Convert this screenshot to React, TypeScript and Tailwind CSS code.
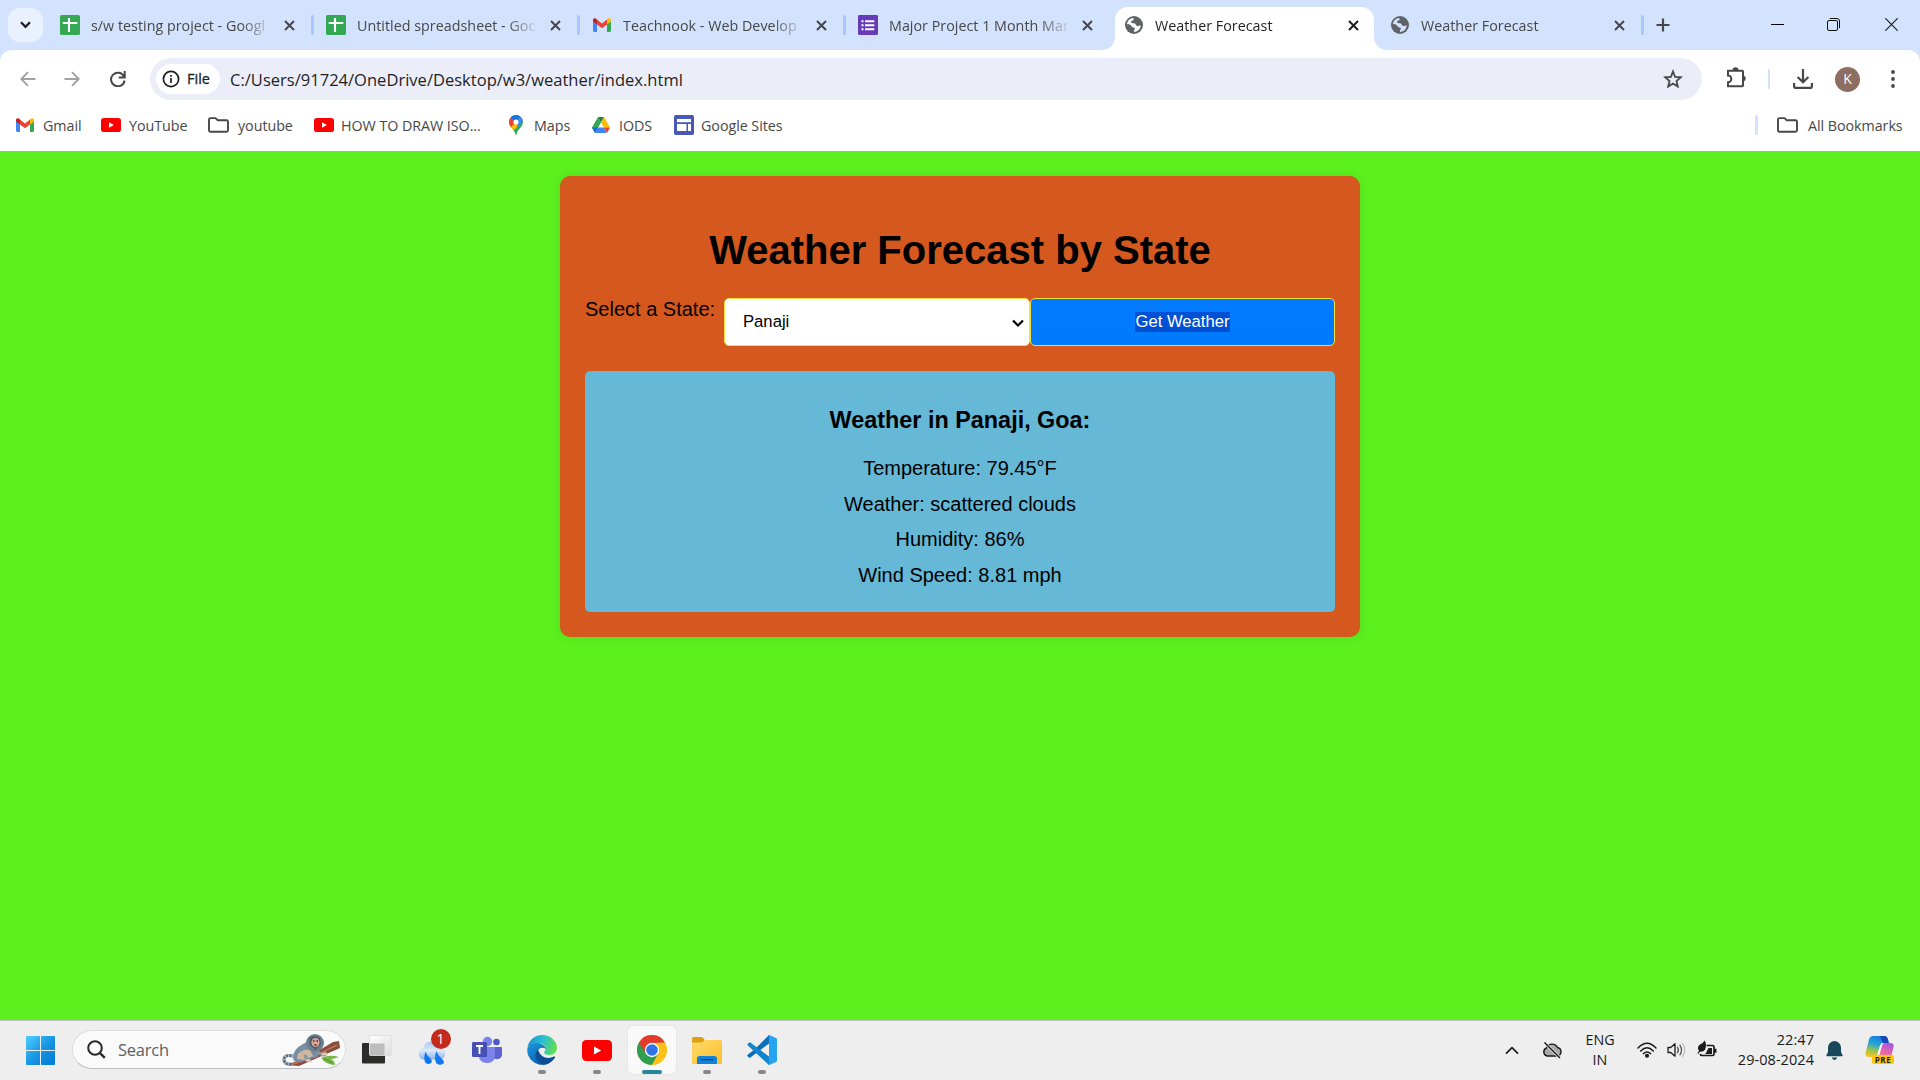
import React from "react";

type IconProps = { className?: string };

function SheetsIcon() {
  return (
    <svg width="20" height="20" viewBox="0 0 20 20">
      <rect width="20" height="20" rx="1.6" fill="#34a853" />
      <path d="M2.7 8h14.6M9 3v14" stroke="#fff" strokeWidth="2.1" />
    </svg>
  );
}

function GmailIcon() {
  return (
    <svg width="18" height="14" viewBox="0 0 18 14">
      <path d="M0 2.2V12.6Q0 14 1.3 14H4V6.2L0 2.8Z" fill="#4285f4" />
      <path d="M18 2.2V12.6Q18 14 16.7 14H14V6.2L18 2.8Z" fill="#34a853" />
      <path d="M14 1.6 15.2.6C16.4-.4 18 .4 18 2V3.6L14 6.6Z" fill="#fbbc04" />
      <path d="M4 1.6 9 5.4 14 1.6V6.6L9 10.3 4 6.6Z" fill="#ea4335" />
      <path d="M0 2C0 .4 1.6-.4 2.8.6L4 1.6V6.6L0 3.6Z" fill="#c5221f" />
    </svg>
  );
}

function FormsIcon() {
  return (
    <svg width="20" height="20" viewBox="0 0 20 20">
      <rect width="20" height="20" rx="1.4" fill="#673ab7" />
      <path d="M3.5 6.2h2M3.5 10.2h2M3.5 14.2h2M7 6.2h9.3M7 10.2h9.3M7 14.2h9.3" stroke="#fff" strokeWidth="2.1" />
    </svg>
  );
}

function GlobeIcon({ land }: { land: string }) {
  return (
    <svg width="18" height="18" viewBox="0 0 18 18">
      <circle cx="9" cy="9" r="9" fill="#5f6368" />
      <path
        d="M8.200 2C9.200 3.200 8.600 4.600 7 4.800c-1 .2-1 1-.8 1.800.3.8 1.600.6 2.900.6 1.900 0 1.600 2.400 3 2.700 1.300.2 2.400-.3 3.700-.5-.4 3.400-3 6.200-6.500 6.500-.6-.9-.2-2 .4-2.600.7-.8-.1-1.700-1-1.800-2-.1-2-1.800-3.200-2.600C4.500 8.100 3 8.400 2 8 2.400 4.800 4.900 2.300 8.200 2Z"
        fill={land}
      />
    </svg>
  );
}

function CrossIcon({ className = "" }: IconProps) {
  return (
    <svg width="11" height="11" viewBox="0 0 11 11" className={className}>
      <path d="m1 1 9 9M10 1 1 10" stroke="currentColor" strokeWidth="2" />
    </svg>
  );
}

function YouTubeIcon({ className = "" }: IconProps) {
  return (
    <svg viewBox="0 0 20 14" className={className}>
      <rect width="20" height="14" rx="2.8" fill="#ff0000" />
      <path d="m8 4.300 4.800 2.700L8 9.700Z" fill="#fff" />
    </svg>
  );
}

function FolderIcon() {
  return (
    <svg width="21" height="16" viewBox="0 0 21 16">
      <path
        d="M1 2.600Q1 1.100 2.500 1.100H7.600L9.700 3.300H18.500Q20 3.300 20 4.800V13.200Q20 14.700 18.500 14.700H2.500Q1 14.700 1 13.200Z"
        fill="none"
        stroke="#474747"
        strokeWidth="1.9"
      />
    </svg>
  );
}

function MapsIcon() {
  return (
    <svg width="14" height="20" viewBox="0 0 14 20">
      <defs>
        <clipPath id="pin">
          <path d="M7 0a7 7 0 0 1 7 7c0 5-5.500 7-6.500 12.500q-.5 1-1 0C5.500 14 0 12 0 7a7 7 0 0 1 7-7Z" />
        </clipPath>
      </defs>
      <g clipPath="url(#pin)">
        <path d="M0 0h14v20H0Z" fill="#34a853" />
        <path d="M0 12 7 5l4 4-9 9Z" fill="#fbbc04" />
        <path d="M0 2 7 7 1 13l-3-3Z" fill="#ea4335" />
        <path d="M1 2 7 7 12 0H3Z" fill="#1a73e8" />
        <path d="M7 7 12 0l3 5-6 7Z" fill="#4285f4" />
      </g>
      <circle cx="7" cy="7" r="2.600" fill="#fff" />
    </svg>
  );
}

function DriveIcon() {
  return (
    <svg width="18" height="16" viewBox="0 0 18 16">
      <path d="M6 0 0 10.500 3 16 9 5.400Z" fill="#34a853" />
      <path d="M6 0h6L9 5.400Z" fill="#188038" />
      <path d="M12 0 18 10.500H12L9 5.400Z" fill="#fbbc04" />
      <path d="M0 10.500H6L3 16Z" fill="#1967d2" />
      <path d="M6 10.500H12L15 16H3Z" fill="#4285f4" />
      <path d="M12 10.500H18L15 16Z" fill="#ea4335" />
    </svg>
  );
}

function SitesIcon() {
  return (
    <svg width="20" height="20" viewBox="0 0 20 20">
      <rect width="20" height="20" rx="1.800" fill="#4758b5" />
      <path d="M3 4h14v3.300H3ZM3 9h9.500v7H3ZM14 9h3v7h-3Z" fill="#fff" />
    </svg>
  );
}

type TabData = { title: string; icon: React.ReactNode; active?: boolean; divider?: boolean };

const tabs: TabData[] = [
  { title: "s/w testing project - Googl", icon: <SheetsIcon />, divider: true },
  { title: "Untitled spreadsheet - Goo", icon: <SheetsIcon />, divider: true },
  { title: "Teachnook - Web Develop", icon: <GmailIcon />, divider: true },
  { title: "Major Project 1 Month Mar", icon: <FormsIcon /> },
  { title: "Weather Forecast", icon: <GlobeIcon land="#ffffff" />, active: true },
  { title: "Weather Forecast", icon: <GlobeIcon land="#d3e3fd" />, divider: true },
];

function Tab({ title, icon, active, divider }: TabData) {
  return (
    <div className="relative flex h-[50px] w-[266px] shrink-0 pt-[7px]">
      {active && (
        <>
          <div className="absolute top-[7px] right-[2px] bottom-0 left-[5px] rounded-t-[13px] bg-white" />
          <svg className="absolute bottom-0 -left-[8px]" width="13" height="13" viewBox="0 0 13 13">
            <path d="M13 0V13H0A13 13 0 0 0 13 0Z" fill="#fff" />
          </svg>
          <svg className="absolute -right-[11px] bottom-0" width="13" height="13" viewBox="0 0 13 13">
            <path d="M0 0V13H13A13 13 0 0 1 0 0Z" fill="#fff" />
          </svg>
        </>
      )}
      <div className="relative flex h-9 w-full items-center pl-[14px]">
        <span className="flex w-5 shrink-0 justify-center">{icon}</span>
        <span
          className={`ml-[11px] w-[178px] shrink-0 pt-[2px] text-[14.300px] leading-[34px] tracking-[0.020px] whitespace-nowrap [mask-image:linear-gradient(to_right,#000_150px,transparent_182px)] ${active ? "text-[#1f1f1f]" : "text-[#474747]"}`}
        >
          {title}
        </span>
        <CrossIcon className={active ? "ml-[15px] text-[#1f1f1f]" : "ml-[15px] text-[#474747]"} />
      </div>
      {divider && <div className="absolute top-[15px] -right-[2px] h-5 w-[3px] rounded-full bg-[#a8c7fa]" />}
    </div>
  );
}

function TabStrip() {
  return (
    <div className="flex h-[50px] bg-[#d3e3fd]">
      <div className="mt-2 ml-2 flex h-[34px] w-[35px] items-center justify-center rounded-[12px] bg-[#e9f0fe]">
        <svg width="11" height="8" viewBox="0 0 11 8">
          <path d="m1 1.300 4.500 4.500L10 1.300" fill="none" stroke="#1f1f1f" strokeWidth="2.300" />
        </svg>
      </div>
      <div className="ml-[3px] flex">
        {tabs.map((tab, i) => (
          <Tab key={i} {...tab} />
        ))}
      </div>
      <svg width="14" height="14" viewBox="0 0 14 14" className="mt-[18px] ml-[14px]">
        <path d="M7 .5v13M.5 7h13" stroke="#474747" strokeWidth="2.200" />
      </svg>
      <div className="ml-auto flex h-[49px] items-center pr-[22px] text-[#1f1f1f]">
        <div className="mr-[43px] h-px w-[13px] bg-black" />
        <svg width="13" height="13" viewBox="0 0 13 13" className="mr-[45px]" fill="none" stroke="#111">
          <rect x=".5" y="2.500" width="10" height="10" rx="1.500" />
          <path d="M2.800.5h7.200Q12.500.5 12.500 3v7.200" />
        </svg>
        <svg width="13" height="13" viewBox="0 0 13 13">
          <path d="m.3.3 12.400 12.400M12.700.3.3 12.700" stroke="#1f1f1f" strokeWidth="1.200" />
        </svg>
      </div>
    </div>
  );
}

function AddressBar() {
  return (
    <div className="flex h-[58px] items-center">
      <svg width="16" height="16" viewBox="0 0 16 16" className="ml-5" fill="none" stroke="#a2a2a2" strokeWidth="1.900">
        <path d="M15.500 8H2M8 1.200 1.300 8 8 14.800" />
      </svg>
      <svg width="16" height="16" viewBox="0 0 16 16" className="ml-[28px]" fill="none" stroke="#a2a2a2" strokeWidth="1.900">
        <path d="M.5 8H14M8 1.200 14.700 8 8 14.800" />
      </svg>
      <svg width="16" height="16" viewBox="0 0 16 16" className="ml-[30px]" fill="none" stroke="#474747" strokeWidth="2">
        <path d="M14 5.500A6.800 6.800 0 1 0 14.600 9.500M14.700 0v6.400H8.700" />
      </svg>
      <div className="ml-[24px] flex h-[42px] w-[1552px] items-center rounded-full bg-[#ebeef8] pl-[6px]">
        <div className="flex h-[30px] w-16 items-center rounded-full bg-white pl-[6px]">
          <svg width="18" height="18" viewBox="0 0 18 18">
            <circle cx="9" cy="9" r="7.600" fill="none" stroke="#1f1f1f" strokeWidth="1.700" />
            <path d="M9 8v5M9 5v1.700" stroke="#1f1f1f" strokeWidth="1.700" />
          </svg>
          <span className="ml-[7px] text-[14.500px] text-[#1f1f1f] [-webkit-text-stroke:0.300px]">File</span>
        </div>
        <span className="ml-[10px] pt-[2px] text-[16.500px] tracking-[0.020px] whitespace-nowrap text-[#1f1f1f]">
          C:/Users/91724/OneDrive/Desktop/w3/weather/index.html
        </span>
        <svg width="20" height="20" viewBox="0 0 20 20" className="mr-[19px] ml-auto">
          <path
            d="m10 2.500 2.100 5.300 5.700.5-4.300 3.700 1.300 5.600-4.800-3-4.800 3 1.300-5.600L2.200 8.300l5.700-.5Z"
            fill="none"
            stroke="#474747"
            strokeWidth="1.800"
          />
        </svg>
      </div>
      <svg width="21" height="22" viewBox="0 0 21 22" className="mb-[2px] ml-[24px]">
        <path
          d="M2 3.800H16.300Q17 3.800 17 4.500V18.600Q17 19.300 16.300 19.300H2V15.300A3.200 3.200 0 0 0 2 8.600Z"
          fill="none"
          stroke="#474747"
          strokeWidth="2"
        />
        <path d="M6.500 3.200a3 3 0 0 1 6 0ZM17.500 8.600a3 3 0 0 1 0 5.800Z" fill="#474747" />
      </svg>
      <div className="ml-[21px] h-5 w-[2px] bg-[#d3e3fd]" />
      <svg width="20" height="20" viewBox="0 0 20 20" className="ml-[23px]" fill="none" stroke="#474747" strokeWidth="2.200">
        <path d="M10 0v12.500M4.600 8 10 13.300 15.400 8M1.100 14v3.200Q1.100 18.900 2.800 18.900H17.200Q18.900 18.900 18.900 17.200V14" />
      </svg>
      <div className="ml-[22px] flex size-[25px] items-center justify-center rounded-full bg-[#8d6e63] text-[14px] leading-none text-white">
        K
      </div>
      <svg width="4" height="18" viewBox="0 0 4 18" className="ml-[31px]" fill="#474747">
        <circle cx="2" cy="2" r="1.900" />
        <circle cx="2" cy="9" r="1.900" />
        <circle cx="2" cy="16" r="1.900" />
      </svg>
    </div>
  );
}

function Bookmark({ icon, label, className }: { icon: React.ReactNode; label: string; className: string }) {
  return (
    <div className={`flex shrink-0 items-center whitespace-nowrap ${className}`}>
      {icon}
      <span className="pt-[2px] leading-5">{label}</span>
    </div>
  );
}

function BookmarksBar() {
  return (
    <div className="flex h-[35px] items-center pb-px pl-4 text-[14.300px] tracking-[-0.050px] text-[#474747]">
      <Bookmark className="w-[85px] gap-[9px]" icon={<GmailIcon />} label="Gmail" />
      <Bookmark className="w-[107px] gap-[8px]" icon={<YouTubeIcon className="h-[14px] w-5" />} label="YouTube" />
      <Bookmark className="w-[106px] gap-[9px]" icon={<FolderIcon />} label="youtube" />
      <Bookmark className="w-[195px] gap-[7px]" icon={<YouTubeIcon className="h-[14px] w-5" />} label="HOW TO DRAW ISO..." />
      <Bookmark className="w-[83px] gap-[11px]" icon={<MapsIcon />} label="Maps" />
      <Bookmark className="w-[82px] gap-[9px]" icon={<DriveIcon />} label="IODS" />
      <Bookmark className="w-[120px] gap-[7px]" icon={<SitesIcon />} label="Google Sites" />
      <div className="ml-auto h-5 w-[3px] rounded-full bg-[#d3e3fd]" />
      <Bookmark className="ml-[19px] w-[143px] gap-[10px]" icon={<FolderIcon />} label="All Bookmarks" />
    </div>
  );
}

const readings = ["Temperature: 79.45°F", "Weather: scattered clouds", "Humidity: 86%", "Wind Speed: 8.81 mph"];

function WeatherPage() {
  return (
    <main className="h-[869px] bg-[#5cf01e] pt-[25px] text-[20px] text-black [font-family:'Liberation_Sans',Arial,sans-serif]">
      <div className="mx-auto h-[461px] w-[800px] rounded-[10px] bg-[#d5581f] px-[25px] pt-[51px] shadow-[0_0_12px_rgba(0,0,0,0.1)]">
        <h1 className="text-center text-[40px] leading-[46px] font-bold">Weather Forecast by State</h1>
        <div className="mt-[25px] flex">
          <span className="w-[139px] leading-[23px]">Select a State:</span>
          <div className="flex h-[48px] w-[306px] items-center justify-between rounded-[5px] border border-[#f0e040] bg-white pr-[5px] pb-[2px] pl-[18px] text-[16.670px]">
            Panaji
            <svg width="12" height="9" viewBox="0 0 12 9" className="mt-[5px]">
              <path d="m1 1.500 5 5 5-5" fill="none" stroke="#000" strokeWidth="2.200" />
            </svg>
          </div>
          <button className="flex h-[48px] w-[305px] items-center justify-center rounded-[5px] border border-[#f0e040] bg-[#007bff] pb-px text-[16.670px] text-white">
            <span className="h-5 bg-[#0050d4] leading-[19px]">Get Weather</span>
          </button>
        </div>
        <section className="mt-[25px] h-[241px] rounded-[5px] bg-[#65b8d6] pt-[36px] text-center">
          <h3 className="text-[23.400px] leading-[27px] font-bold">Weather in Panaji, Goa:</h3>
          <div className="mt-[17px]">
            {readings.map((line) => (
              <p key={line} className="h-[35.500px] leading-[35.500px]">
                {line}
              </p>
            ))}
          </div>
        </section>
      </div>
    </main>
  );
}

function Marmoset() {
  return (
    <svg width="60" height="34" viewBox="0 0 60 34">
      <path d="M5 32 27 24 52 9l6-1 1 7-25 11-16 7Z" fill="#8a4b3c" />
      <path d="M9 32 30 25 56 12" stroke="#b9745f" strokeWidth="1.500" fill="none" />
      <path d="M40 25q8-4 18-1-5 2-8 2 4 2 4 6-9 0-14-7Z" fill="#79b84a" />
      <path d="M43 26q5 1 9 5" stroke="#4f8d2e" fill="none" />
      <path d="M12 23q-9-2-9 4 1 5 7 4" fill="none" stroke="#566c7b" strokeWidth="3" />
      <path d="M12 23q-9-2-9 4 1 5 7 4" fill="none" stroke="#a8b3ba" strokeWidth="3" strokeDasharray="1.500 2" />
      <path d="M12 25q0-9 10-14l9-5 8 8-2 10-8 2-10 3-6-1Z" fill="#7890a5" />
      <path d="M17 21q6-6 12-4l3 6-9 4-7-1Z" fill="#cfb79e" />
      <path d="m33 17 9 5 3-1M24 23l3 4" stroke="#8396a5" strokeWidth="3" strokeLinecap="round" fill="none" />
      <circle cx="34" cy="10" r="9" fill="#6b8192" />
      <path d="M28.500 5q5-4 10.500 0l1 6-5.500 6-5.500-5Z" fill="#4f5d6b" />
      <ellipse cx="34.500" cy="9.500" rx="4" ry="4.500" fill="#d8a596" />
      <path d="M32 8h1.500M35.500 8H37M33.500 12h2" stroke="#3b2a2a" strokeWidth="1.300" />
      <path d="M41 22q3-3 5 0M25 28q3-2 5 1" stroke="#e7c6ab" strokeWidth="2.500" fill="none" />
    </svg>
  );
}

function TaskViewIcon() {
  return (
    <svg width="30" height="30" viewBox="0 0 30 30">
      <defs>
        <linearGradient id="tv" x1="0" y1="0" x2="1" y2="1">
          <stop stopColor="#fff" />
          <stop offset="1" stopColor="#ddd" />
        </linearGradient>
      </defs>
      <rect y="8" width="23" height="20.500" rx="1" fill="#2c2c2a" />
      <rect x="7.500" y=".5" width="22" height="20" rx="1" fill="url(#tv)" stroke="#e2e2e2" />
      <path d="M8 8.500h14.500v12H8Z" fill="#bdbdbd" />
    </svg>
  );
}

function RainIcon() {
  return (
    <div className="relative size-[30px]">
      <svg width="30" height="30" viewBox="0 0 30 30">
        <defs>
          <linearGradient id="cloud" x1="0" y1="0" x2="0" y2="1">
            <stop stopColor="#a9c6ee" />
            <stop offset=".5" stopColor="#dbe8fa" />
            <stop offset="1" stopColor="#8fb2e6" />
          </linearGradient>
        </defs>
        <path d="M6 24.500a6 6 0 0 1 0-11.500 9 9 0 0 1 17-1 6.500 6.500 0 0 1 1 12.500Z" fill="url(#cloud)" />
        <path d="M8.500 16.500q1 3.500 4 6 3.500 3 1.800 5.200-3 2.500-5.800 0Q6 24 8.500 16.500ZM19.500 16q1 4 5 7.500 3.500 3 2 5-3.500 2.500-7 0Q16.500 24 19.500 16Z" fill="#0f78f2" />
      </svg>
      <span className="absolute -top-[6px] left-[14px] flex size-5 items-center justify-center rounded-full bg-[#c42b1c] text-[14px] leading-none text-white">
        1
      </span>
    </div>
  );
}

function TeamsIcon() {
  return (
    <svg width="30" height="30" viewBox="0 0 30 30">
      <circle cx="24.500" cy="7" r="3.300" fill="#5059c9" />
      <circle cx="15.500" cy="6.500" r="4.700" fill="#7b83eb" />
      <path d="M20 12h9.200q.8 0 .8.800V19q0 5-5 5.200-3-.2-5-2Z" fill="#5b63d0" />
      <path d="M7 12h16v9q0 6.500-8 7-8-.5-8-7Z" fill="#7b83eb" />
      <rect y="7" width="15" height="15" rx="1.300" fill="#4650b5" />
      <path d="M4 11h7M7.500 11v8" stroke="#fff" strokeWidth="1.900" />
    </svg>
  );
}

function EdgeIcon() {
  return (
    <svg width="30" height="30" viewBox="0 0 30 30">
      <defs>
        <linearGradient id="edgeTop" x1="0" y1=".3" x2="1" y2=".5">
          <stop stopColor="#1b8fd8" />
          <stop offset=".5" stopColor="#2bbfd0" />
          <stop offset="1" stopColor="#64df4c" />
        </linearGradient>
        <linearGradient id="edgeMid" x1="0" y1="0" x2=".6" y2="1">
          <stop stopColor="#1b98e0" />
          <stop offset="1" stopColor="#0e60ad" />
        </linearGradient>
      </defs>
      <path d="M.3 13A15 15 0 0 1 15 0c9 0 15 6.500 15 12.500 0 4.500-3.300 7.500-7.500 7.500-3.500 0-5.500-1-5.500-2.200 0-1 1.500-1.500 1.500-4C18.500 10.500 15 8 11 8 6 8 1.500 10.500.3 13Z" fill="url(#edgeTop)" />
      <path d="M.2 14C1.500 9.500 6.500 7.500 11 8c4.500.5 7.500 3.500 7.500 6-3-2.500-7-1-8 3-1.200 5 2.500 10.500 7.500 12.500A15 15 0 0 1 .2 14Z" fill="url(#edgeMid)" />
      <path d="M11 14.500c-2.500 2.500-3.500 6.500-1 10.500s6 5.300 9 4.400c4-1 7.200-3.700 9-7 .4-.8-.3-1.100-1-.8-6 2.900-13.500 1.400-16-7.100Z" fill="#0c4f94" />
    </svg>
  );
}

function ChromeIcon() {
  return (
    <svg width="30" height="30" viewBox="0 0 30 30">
      <circle cx="15" cy="15" r="15" fill="#fbc116" />
      <path d="M15 15 2 7.500A15 15 0 0 0 15 30l6.300-11Z" fill="#2f9e4f" />
      <path d="M15 15 8.700 18.700 2 7.500A15 15 0 0 1 28 7.500L15 8Z" fill="#e33b2e" />
      <path d="M15 8h13a15 15 0 0 1-13 22l6.200-11.300Z" fill="#fbc116" />
      <circle cx="15" cy="15" r="7.200" fill="#fff" />
      <circle cx="15" cy="15" r="5.800" fill="#2f74ea" />
    </svg>
  );
}

function ExplorerIcon() {
  return (
    <svg width="30" height="30" viewBox="0 0 30 30">
      <defs>
        <linearGradient id="folder" x1="0" y1="0" x2="1" y2="1">
          <stop stopColor="#ffdc6b" />
          <stop offset="1" stopColor="#f9bd2b" />
        </linearGradient>
      </defs>
      <path d="M0 3.500Q0 2 1.500 2H9.500Q11 2 13 5.500H28V10H0Z" fill="#dfa016" />
      <path d="M0 7.500H10L13 5H28.500Q30 5 30 6.500V27.500Q30 29 28.500 29H1.500Q0 29 0 27.500Z" fill="url(#folder)" />
      <path d="M5 29V23.500Q5 21 7.500 21H22.500Q25 21 25 23.500V29Z" fill="#1282d6" />
      <path d="M8.500 24.700h13" stroke="#0b4f8a" strokeWidth="1.300" />
    </svg>
  );
}

function CodeIcon() {
  return (
    <svg width="30" height="30" viewBox="0 0 30 30">
      <path d="M22 0 7.500 14.500 1.200 19.300 0 20.500l1.700 1.900q.8.600 1.700 0L22 8.500Z" fill="#0a6fb8" />
      <path d="M22 30 1.100 10.800Q-.2 9.500.9 8.600L2 7.700q.8-.6 1.700 0L22 21.500Z" fill="#1285cd" />
      <path d="M21 .5Q22-.3 23 .2L29 3q1 .5 1 1.600V25.400q0 1.100-1 1.600l-6 2.800q-1.200.5-2-.4 1 .3 1-1.200V1.700Q22 .4 21 .5Z" fill="#23a3f0" />
    </svg>
  );
}

function TaskButton({ children, state }: { children: React.ReactNode; state?: "open" | "active" }) {
  return (
    <div className="flex h-full w-[55px] items-center justify-center">
      <div
        className={`relative flex size-12 items-center justify-center rounded-[5px] ${state === "active" ? "bg-[#f9f9f9] shadow-[0_0_1px_1px_#e5e5e5]" : ""}`}
      >
        {children}
        {state === "open" && <div className="absolute bottom-0 left-5 h-1 w-2 rounded-full bg-[#868686]" />}
        {state === "active" && <div className="absolute bottom-0 left-[14px] h-1 w-5 rounded-full bg-[#27879a]" />}
      </div>
    </div>
  );
}

function SystemTray() {
  return (
    <div className="ml-auto flex h-full items-center pr-[25px] text-[#1b1b1b]">
      <svg width="14" height="9" viewBox="0 0 14 9" className="mr-[23px]">
        <path d="M1 7.700 7 1.700l6 6" fill="none" stroke="currentColor" strokeWidth="1.700" />
      </svg>
      <svg width="20" height="18" viewBox="0 0 20 18">
        <path d="M5 15a4.200 4.200 0 0 1-.5-8A6 6 0 0 1 15.500 6.500 4.300 4.300 0 0 1 15 15Z" fill="#a9a9a9" stroke="#1b1b1b" strokeWidth="1.400" />
        <path d="m3 2 15 15" stroke="#eee" strokeWidth="3" />
        <path d="m2.500 1.500 15.500 15.500" stroke="#1b1b1b" strokeWidth="1.500" />
      </svg>
      <div className="w-[75px] pl-px text-center text-[14.300px] leading-5">
        <div>ENG</div>
        <div>IN</div>
      </div>
      <svg width="20" height="16" viewBox="0 0 20 16" fill="none" stroke="currentColor" strokeWidth="1.500" strokeLinecap="round">
        <path d="M1 6q9-9.500 18 0M3.700 8.900q6.300-6.500 12.600 0M6.500 11.600q3.500-3.200 7 0" />
        <circle cx="10" cy="13.700" r="1.300" fill="currentColor" />
      </svg>
      <svg width="20" height="16" viewBox="0 0 20 16" className="ml-[10px]" fill="none" strokeLinecap="round">
        <path d="M1 5.500h2.700L8 1.800v12.400L3.700 10.500H1Z" stroke="#1b1b1b" strokeWidth="1.300" strokeLinejoin="round" />
        <path d="M10.500 5.300q1.800 2.700 0 5.400M13 3.300q3 4.700 0 9.400" stroke="#555" strokeWidth="1.300" />
        <path d="M15.500 1.500q4.500 6.500 0 13" stroke="#bdbdbd" strokeWidth="1.300" />
      </svg>
      <svg width="21" height="18" viewBox="0 0 21 18" className="mb-[2px] ml-[10px]">
        <path d="M9.500 5.500H15.500Q17 5.500 17 7V14Q17 15.500 15.500 15.500H5Q3.500 15.500 3.200 14M18.600 8.800v4" fill="none" stroke="#1b1b1b" strokeWidth="1.700" />
        <path d="M9 13 11.500 8H15v6H8Z" fill="#1b1b1b" />
        <path d="M7.500.5Q9.500 3 8.700 7.500 8 12 3 11.800L1 14 .3 13.200 2 11Q-.5 6.500 3 4.500 6.500 3 7.500.5Z" fill="#1b1b1b" />
      </svg>
      <div className="w-[96px] text-right text-[14.500px] leading-5 tracking-[0.050px]">
        <div>22:47</div>
        <div>29-08-2024</div>
      </div>
      <svg width="17" height="19" viewBox="0 0 17 19" className="ml-[12px]" fill="#17485a">
        <path d="M8.500 0A6.500 6.500 0 0 1 15 6.500V11l1.500 3Q17 15.200 16 15.200H1Q0 15.200.5 14L2 11V6.500A6.500 6.500 0 0 1 8.500 0ZM5.700 16.500h5.600q-.8 2.400-2.800 2.400t-2.800-2.400Z" />
      </svg>
      <div className="relative ml-[22px] size-[30px]">
        <svg width="30" height="30" viewBox="0 0 30 30">
          <defs>
            <linearGradient id="cpA" x1=".6" y1="0" x2=".3" y2="1">
              <stop stopColor="#1579dd" />
              <stop offset=".4" stopColor="#25a6d8" />
              <stop offset=".75" stopColor="#a4c640" />
              <stop offset="1" stopColor="#f3c02c" />
            </linearGradient>
            <linearGradient id="cpB" x1=".8" y1="0" x2=".3" y2="1">
              <stop stopColor="#a552e4" />
              <stop offset=".5" stopColor="#e868a9" />
              <stop offset="1" stopColor="#f89764" />
            </linearGradient>
          </defs>
          <path d="M8 1H19q3 0 3.800 3l1 4H19q-3 0-4 3l-2.500 8q-1 3-4 3H4q-4 0-3.500-4L4 4.500Q5 1 8 1Z" fill="url(#cpA)" />
          <path d="M15 1h4q3 0 3.800 3l1 4H18Z" fill="#1b45bb" />
          <path d="M19 8h6q4.500 0 3.500 4L26 22q-1 4-4 4H9q3-1 4-4l3-11q1-3 3-3Z" fill="url(#cpB)" />
          <path d="M19 8q-3 0-4 3l-2.500 8q-.6 2-2 3h3.200L17 11q.6-2.500 2-3Z" fill="#fff" />
        </svg>
        <span className="absolute top-[20px] left-[7px] flex h-[9px] w-[22px] items-center justify-center rounded-[2px] bg-[#ffc40c] text-[8px] leading-none font-bold tracking-[0.500px] text-[#222]">
          PRE
        </span>
      </div>
    </div>
  );
}

function Taskbar() {
  return (
    <footer className="flex h-[60px] items-center border-t border-[#c3c3c3] bg-[#eeeeee] pb-px">
      <svg width="29" height="29" viewBox="0 0 29 29" className="mt-px ml-[26px]">
        <defs>
          <linearGradient id="win" x1="0" y1="0" x2="1" y2="1">
            <stop stopColor="#4fd0ff" />
            <stop offset=".5" stopColor="#1897e5" />
            <stop offset="1" stopColor="#0078d4" />
          </linearGradient>
        </defs>
        <path d="M1 0h13v14H0V1Q0 0 1 0ZM15 0h13q1 0 1 1v13H15ZM0 15h14v14H1Q0 29 0 28ZM15 15h14v13q0 1-1 1H15Z" fill="url(#win)" />
      </svg>
      <div className="-mt-px ml-[17px] flex h-[39px] w-[274px] items-center rounded-full border border-[#dedede] border-b-[#bdbdbd] bg-[#fafafa] pl-[14px]">
        <svg width="19" height="19" viewBox="0 0 19 19">
          <circle cx="8" cy="8" r="6.800" fill="none" stroke="#2a2a2a" strokeWidth="2" />
          <path d="m12.800 12.800 5 5" stroke="#2a2a2a" strokeWidth="2.400" />
        </svg>
        <span className="ml-[12px] pt-px text-[16.500px] leading-5 tracking-[-0.250px] text-[#606060]">Search</span>
        <span className="mr-[4px] ml-auto">
          <Marmoset />
        </span>
      </div>
      <div className="ml-[3px] flex h-full">
        <TaskButton><TaskViewIcon /></TaskButton>
        <TaskButton><RainIcon /></TaskButton>
        <TaskButton><TeamsIcon /></TaskButton>
        <TaskButton state="open"><EdgeIcon /></TaskButton>
        <TaskButton state="open"><YouTubeIcon className="h-[21px] w-[30px]" /></TaskButton>
        <TaskButton state="active"><ChromeIcon /></TaskButton>
        <TaskButton state="open"><ExplorerIcon /></TaskButton>
        <TaskButton state="open"><CodeIcon /></TaskButton>
      </div>
      <SystemTray />
    </footer>
  );
}

export default function App() {
  return (
    <div className="h-[1080px] w-[1920px] overflow-hidden bg-[#d3e3fd] [font-family:'Open_Sans','Noto_Sans',sans-serif]">
      <TabStrip />
      <div className="h-[101px] rounded-t-[12px] bg-white">
        <AddressBar />
        <BookmarksBar />
      </div>
      <WeatherPage />
      <Taskbar />
    </div>
  );
}
